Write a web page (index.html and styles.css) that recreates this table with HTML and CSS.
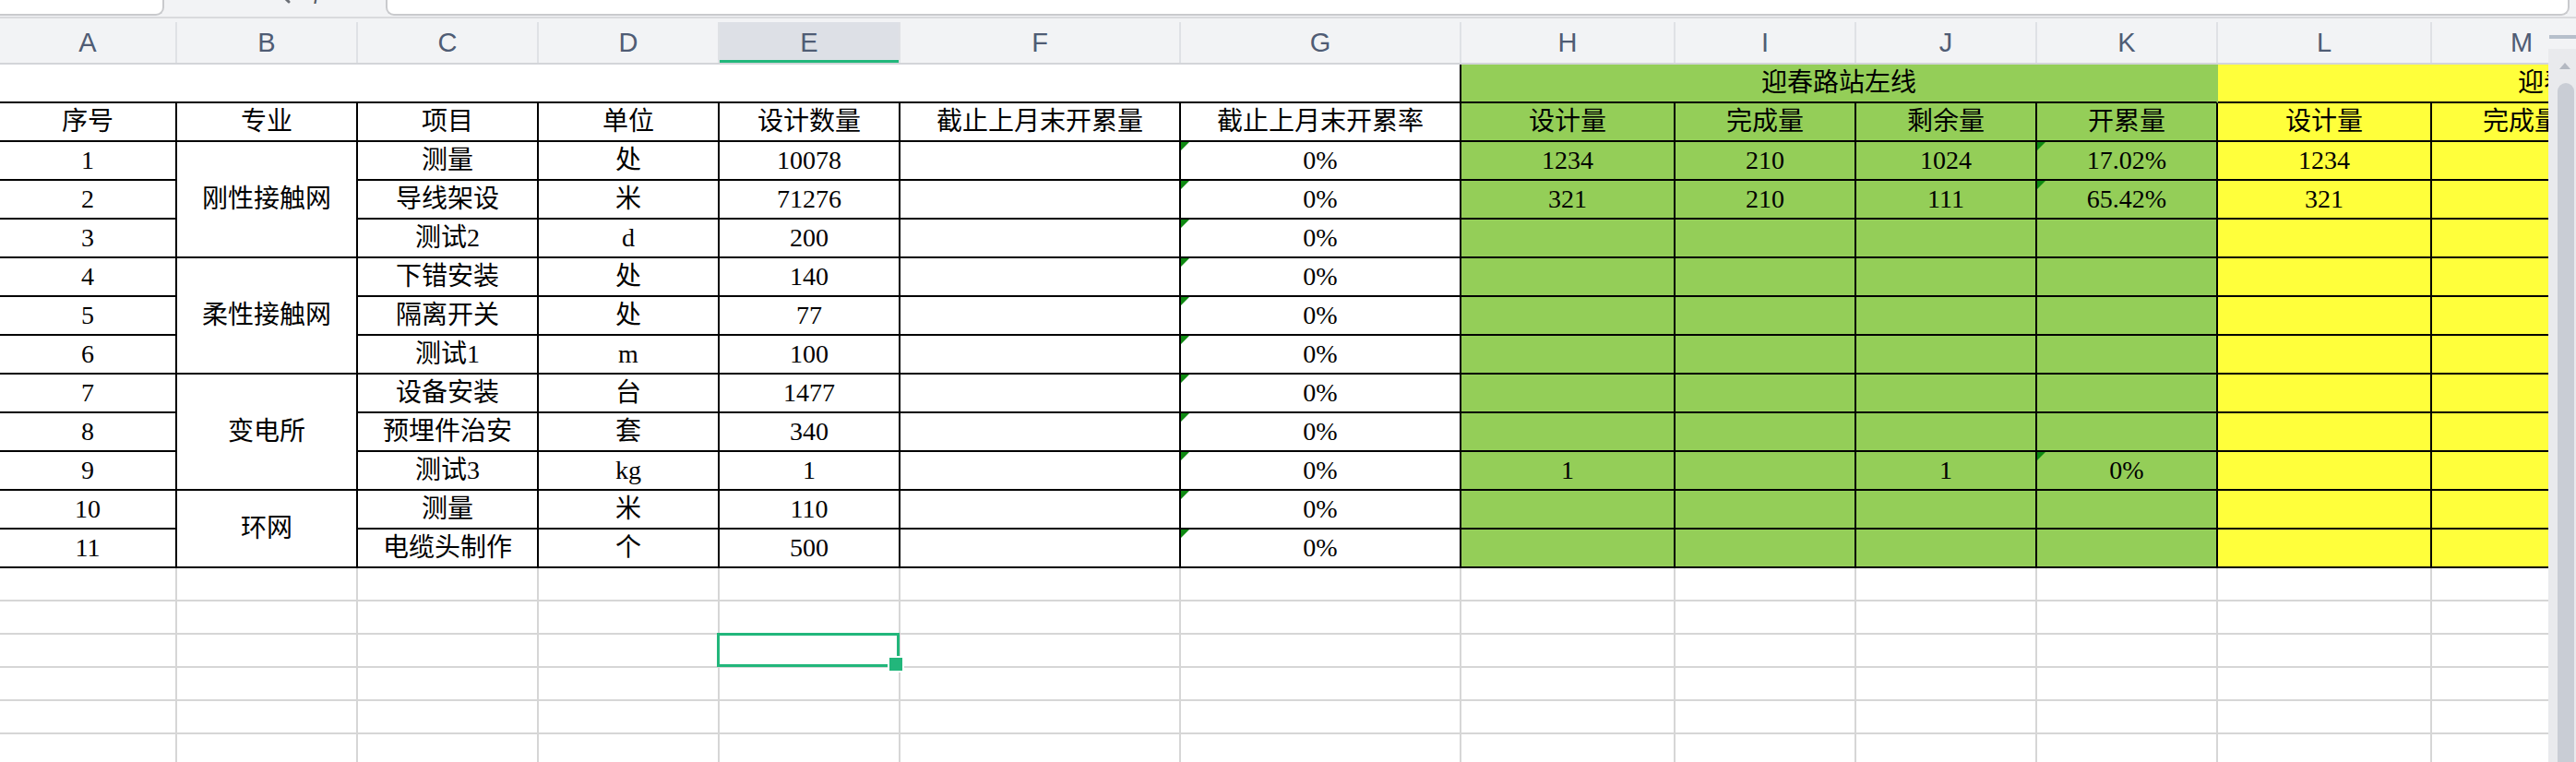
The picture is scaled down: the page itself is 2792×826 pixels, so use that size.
FILE: index.html
```html
<!DOCTYPE html>
<html lang="zh-CN">
<head>
<meta charset="utf-8">
<title>Sheet</title>
<link rel="stylesheet" href="styles.css">
</head>
<body>
<div class="app">
  <div class="topbar">
    <div class="namebox"><span class="name">E16</span></div>
    <div class="tools">
      <svg class="ico-search" width="30" height="30" viewBox="0 0 30 30"><circle cx="12" cy="11" r="8" fill="none" stroke="#6b6f76" stroke-width="2.5"/><path d="M18 17 L25 24" stroke="#6b6f76" stroke-width="3" stroke-linecap="round"/></svg>
      <span class="fx">fx</span>
    </div>
    <div class="formula"></div>
  </div>

  <div class="colheads">
    <div class="ch">A</div><div class="ch">B</div><div class="ch">C</div><div class="ch">D</div>
    <div class="ch active">E</div><div class="ch">F</div><div class="ch">G</div><div class="ch">H</div>
    <div class="ch">I</div><div class="ch">J</div><div class="ch">K</div><div class="ch">L</div>
    <div class="ch">M</div><div class="ch">N</div><div class="ch">O</div>
  </div>

  <div class="sheet">
    <!-- row 1 -->
    <div class="c t-blank"></div>
    <div class="c g t-g">迎春路站左线</div>
    <div class="c y t-y">迎春路站右线</div>
    <!-- row 2 -->
    <div class="c">序号</div><div class="c">专业</div><div class="c">项目</div><div class="c">单位</div>
    <div class="c">设计数量</div><div class="c">截止上月末开累量</div><div class="c">截止上月末开累率</div>
    <div class="c g">设计量</div><div class="c g">完成量</div><div class="c g">剩余量</div><div class="c g">开累量</div>
    <div class="c y">设计量</div><div class="c y">完成量</div><div class="c y">剩余量</div><div class="c y">开累量</div>
    <!-- data 1 -->
    <div class="c">1</div><div class="c span3">刚性接触网</div><div class="c">测量</div><div class="c">处</div>
    <div class="c">10078</div><div class="c"></div><div class="c tri">0%</div>
    <div class="c g">1234</div><div class="c g">210</div><div class="c g">1024</div><div class="c g tri">17.02%</div>
    <div class="c y">1234</div><div class="c y"></div><div class="c y"></div><div class="c y"></div>
    <!-- data 2 -->
    <div class="c">2</div><div class="c">导线架设</div><div class="c">米</div>
    <div class="c">71276</div><div class="c"></div><div class="c tri">0%</div>
    <div class="c g">321</div><div class="c g">210</div><div class="c g">111</div><div class="c g tri">65.42%</div>
    <div class="c y">321</div><div class="c y"></div><div class="c y"></div><div class="c y"></div>
    <!-- data 3 -->
    <div class="c">3</div><div class="c">测试2</div><div class="c">d</div>
    <div class="c">200</div><div class="c"></div><div class="c tri">0%</div>
    <div class="c g"></div><div class="c g"></div><div class="c g"></div><div class="c g"></div>
    <div class="c y"></div><div class="c y"></div><div class="c y"></div><div class="c y"></div>
    <!-- data 4 -->
    <div class="c">4</div><div class="c span3">柔性接触网</div><div class="c">下错安装</div><div class="c">处</div>
    <div class="c">140</div><div class="c"></div><div class="c tri">0%</div>
    <div class="c g"></div><div class="c g"></div><div class="c g"></div><div class="c g"></div>
    <div class="c y"></div><div class="c y"></div><div class="c y"></div><div class="c y"></div>
    <!-- data 5 -->
    <div class="c">5</div><div class="c">隔离开关</div><div class="c">处</div>
    <div class="c">77</div><div class="c"></div><div class="c tri">0%</div>
    <div class="c g"></div><div class="c g"></div><div class="c g"></div><div class="c g"></div>
    <div class="c y"></div><div class="c y"></div><div class="c y"></div><div class="c y"></div>
    <!-- data 6 -->
    <div class="c">6</div><div class="c">测试1</div><div class="c">m</div>
    <div class="c">100</div><div class="c"></div><div class="c tri">0%</div>
    <div class="c g"></div><div class="c g"></div><div class="c g"></div><div class="c g"></div>
    <div class="c y"></div><div class="c y"></div><div class="c y"></div><div class="c y"></div>
    <!-- data 7 -->
    <div class="c">7</div><div class="c span3">变电所</div><div class="c">设备安装</div><div class="c">台</div>
    <div class="c">1477</div><div class="c"></div><div class="c tri">0%</div>
    <div class="c g"></div><div class="c g"></div><div class="c g"></div><div class="c g"></div>
    <div class="c y"></div><div class="c y"></div><div class="c y"></div><div class="c y"></div>
    <!-- data 8 -->
    <div class="c">8</div><div class="c">预埋件治安</div><div class="c">套</div>
    <div class="c">340</div><div class="c"></div><div class="c tri">0%</div>
    <div class="c g"></div><div class="c g"></div><div class="c g"></div><div class="c g"></div>
    <div class="c y"></div><div class="c y"></div><div class="c y"></div><div class="c y"></div>
    <!-- data 9 -->
    <div class="c">9</div><div class="c">测试3</div><div class="c">kg</div>
    <div class="c">1</div><div class="c"></div><div class="c tri">0%</div>
    <div class="c g">1</div><div class="c g"></div><div class="c g">1</div><div class="c g tri">0%</div>
    <div class="c y"></div><div class="c y"></div><div class="c y"></div><div class="c y"></div>
    <!-- data 10 -->
    <div class="c">10</div><div class="c span2">环网</div><div class="c">测量</div><div class="c">米</div>
    <div class="c">110</div><div class="c"></div><div class="c tri">0%</div>
    <div class="c g"></div><div class="c g"></div><div class="c g"></div><div class="c g"></div>
    <div class="c y"></div><div class="c y"></div><div class="c y"></div><div class="c y"></div>
    <!-- data 11 -->
    <div class="c">11</div><div class="c">电缆头制作</div><div class="c">个</div>
    <div class="c">500</div><div class="c"></div><div class="c tri">0%</div>
    <div class="c g"></div><div class="c g"></div><div class="c g"></div><div class="c g"></div>
    <div class="c y"></div><div class="c y"></div><div class="c y"></div><div class="c y"></div>

    <!-- blank rows -->
    <div class="b"></div><div class="b"></div><div class="b"></div><div class="b"></div><div class="b"></div><div class="b"></div><div class="b"></div><div class="b"></div><div class="b"></div><div class="b"></div><div class="b"></div><div class="b"></div><div class="b"></div><div class="b"></div><div class="b"></div>
    <div class="b"></div><div class="b"></div><div class="b"></div><div class="b"></div><div class="b"></div><div class="b"></div><div class="b"></div><div class="b"></div><div class="b"></div><div class="b"></div><div class="b"></div><div class="b"></div><div class="b"></div><div class="b"></div><div class="b"></div>
    <div class="b"></div><div class="b"></div><div class="b"></div><div class="b"></div><div class="b sel"></div><div class="b"></div><div class="b"></div><div class="b"></div><div class="b"></div><div class="b"></div><div class="b"></div><div class="b"></div><div class="b"></div><div class="b"></div><div class="b"></div>
    <div class="b"></div><div class="b"></div><div class="b"></div><div class="b"></div><div class="b"></div><div class="b"></div><div class="b"></div><div class="b"></div><div class="b"></div><div class="b"></div><div class="b"></div><div class="b"></div><div class="b"></div><div class="b"></div><div class="b"></div>
    <div class="b"></div><div class="b"></div><div class="b"></div><div class="b"></div><div class="b"></div><div class="b"></div><div class="b"></div><div class="b"></div><div class="b"></div><div class="b"></div><div class="b"></div><div class="b"></div><div class="b"></div><div class="b"></div><div class="b"></div>
    <div class="b"></div><div class="b"></div><div class="b"></div><div class="b"></div><div class="b"></div><div class="b"></div><div class="b"></div><div class="b"></div><div class="b"></div><div class="b"></div><div class="b"></div><div class="b"></div><div class="b"></div><div class="b"></div><div class="b"></div>
  </div>

  <div class="split"></div>
  <div class="vscroll"><div class="thumb"></div></div>
</div>
</body>
</html>
```

FILE: styles.css
```css
* { box-sizing: border-box; }
html, body { margin: 0; padding: 0; background: #fff; }
body { font-family: "Liberation Serif", "Noto Sans CJK SC", serif; }

.app {
  --cols: 192px 196px 196px 196px 196px 304px 304px 232px 196px 196px 196px 232px 196px 196px 196px;
  position: relative;
  width: 2792px;
  height: 826px;
  overflow: hidden;
  background: #fff;
}

/* top toolbar strip */
.topbar {
  display: flex;
  height: 20px;
  background: #f2f3f5;
  border-bottom: 2px solid #d9dadd;
  overflow: hidden;
}
.namebox {
  width: 178px;
  height: 17px;
  background: #fff;
  border-right: 2px solid #c9cacd;
  border-bottom: 2px solid #c9cacd;
  border-bottom-right-radius: 9px;
  overflow: hidden;
  padding-left: 22px;
}
.name {
  display: block;
  margin-top: -20px;
  font: 26px/26px "Liberation Mono", monospace;
  color: #222;
}
.tools {
  width: 240px;
  display: flex;
  align-items: flex-start;
  padding-left: 110px;
  gap: 22px;
}
.ico-search { margin-top: -22px; flex: none; }
.fx {
  margin-top: -22px;
  font: italic 26px/26px "Liberation Serif", serif;
  color: #555a62;
}
.formula {
  flex: 1;
  margin-right: 7px;
  height: 17px;
  background: #fff;
  border: 2px solid #c9cacd;
  border-top: 0;
  border-radius: 0 0 9px 9px;
}

/* column letters */
.colheads {
  display: grid;
  grid-template-columns: var(--cols);
  width: 3224px;
  padding-top: 4px;
  background: #f2f3f5;
  border-bottom: 2px solid #d3d5d9;
}
.ch {
  height: 44px;
  border-right: 2px solid #dfe1e5;
  display: flex;
  align-items: center;
  justify-content: center;
  font: 29px "Liberation Sans", Arial, sans-serif;
  color: #4f5c74;
}
.ch.active {
  background: #dde0e6;
  box-shadow: inset 0 -3px 0 #21b77b;
}

/* sheet grid */
.sheet {
  display: grid;
  grid-template-columns: var(--cols);
  grid-template-rows: repeat(13, 42px);
  grid-auto-rows: 36px;
  width: 3224px;
}
.c {
  border-right: 2px solid #000;
  border-bottom: 2px solid #000;
  display: flex;
  align-items: center;
  justify-content: center;
  font-size: 28px;
  line-height: 1;
  color: #000;
  white-space: nowrap;
}
.g { background: #94ce58; }
.y { background: #ffff3b; }
.span2 { grid-row: span 2; }
.span3 { grid-row: span 3; }
.t-blank { grid-column: span 7; }
.t-g { grid-column: span 4; border-right-color: transparent; }
.t-y { grid-column: span 4; justify-content: center; }

.tri { position: relative; }
.tri::before {
  content: "";
  position: absolute;
  left: 0;
  top: 0;
  border-top: 9px solid #0f8a12;
  border-right: 9px solid transparent;
}

.b {
  border-right: 2px solid #d6d6d6;
  border-bottom: 2px solid #d6d6d6;
}
.sel { position: relative; }
.sel::after {
  content: "";
  position: absolute;
  top: -2px;
  left: -3px;
  right: -1px;
  bottom: -1px;
  border: 3px solid #22b67b;
}
.sel::before {
  content: "";
  position: absolute;
  right: -6px;
  bottom: -7px;
  width: 14px;
  height: 14px;
  background: #22b67b;
  border: 2px solid #fff;
  z-index: 1;
}

/* overlay scrollbar */
.split {
  position: absolute;
  top: 38px;
  right: 0;
  width: 29px;
  height: 4px;
  background: #b6bfcb;
}
.vscroll {
  position: absolute;
  top: 53px;
  right: 0;
  bottom: 0;
  width: 30px;
  background: #e9eaed;
  padding: 37px 2px 0 10px;
}
.vscroll::before {
  content: "";
  position: absolute;
  top: 15px;
  left: 12px;
  border-left: 6px solid transparent;
  border-right: 6px solid transparent;
  border-bottom: 7px solid #b4b9c2;
}
.thumb {
  height: 820px;
  background: #c9cdd5;
  border-radius: 9px;
}
```
